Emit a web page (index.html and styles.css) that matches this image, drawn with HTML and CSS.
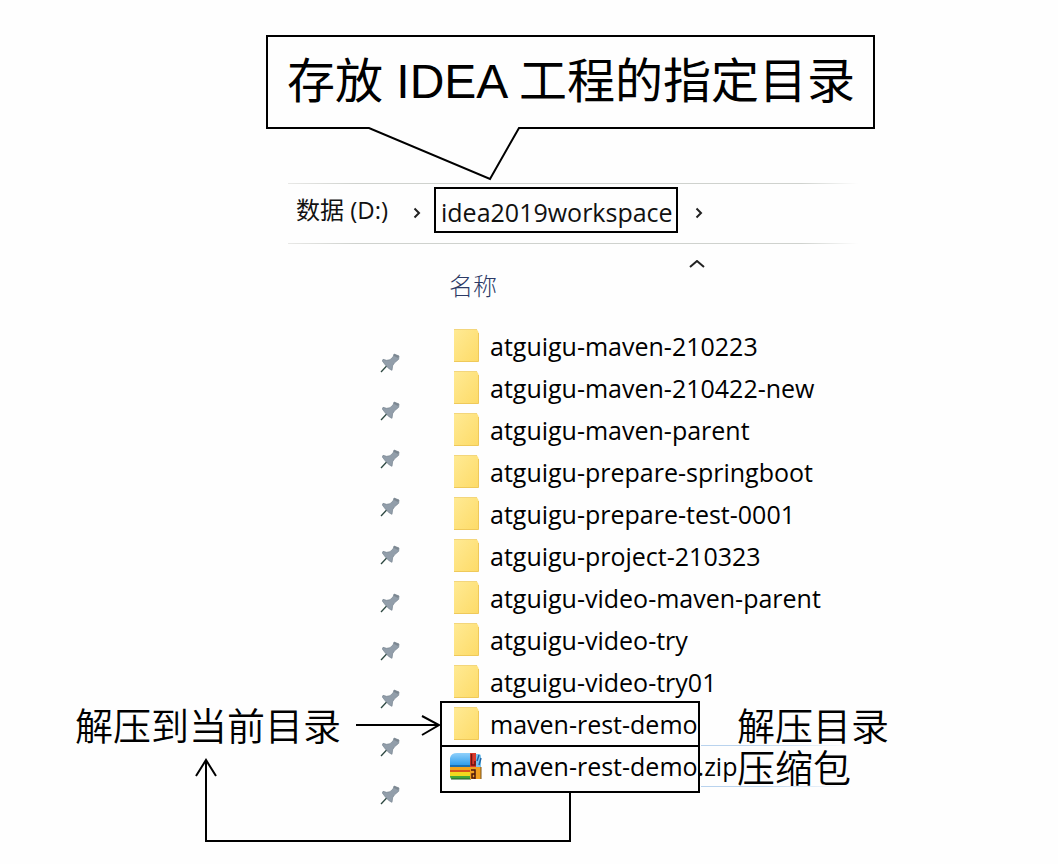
FILE: index.html
```html
<!DOCTYPE html>
<html lang="zh-CN">
<head>
<meta charset="utf-8">
<title>存放 IDEA 工程的指定目录</title>
<link rel="stylesheet" href="styles.css">
</head>
<body>
<svg class="defs" width="0" height="0" aria-hidden="true">
  <linearGradient id="folder-fill" x1="0" y1="0" x2="1" y2="1">
    <stop offset="0" stop-color="#ffea94"/><stop offset="1" stop-color="#fddb68"/>
  </linearGradient>
  <linearGradient id="sky" x1="0" y1="0" x2="0" y2="1">
    <stop offset="0" stop-color="#8fd0fb"/><stop offset="1" stop-color="#2b9bea"/>
  </linearGradient>
  <symbol id="folder" viewBox="0 0 26 33">
    <path d="M1 .5H24L25.500 3V32.500H1Z" fill="url(#folder-fill)"/>
    <path d="M1 32.500H25.500V4" fill="none" stroke="#efc95a" stroke-width="1"/>
    <path d="M1 .5H24" fill="none" stroke="#f3d67c" stroke-width="1"/>
  </symbol>
  <symbol id="pin" viewBox="30 98 60 60">
    <path d="M33 155L52 135" stroke="#2c4740" stroke-width="4"/>
    <path d="M72 101L87 107L86 117L73 128L68 136L66 150L58 146L46 134L37 122L39 117L50 120L60 118L69 110Z" fill="#929eaa" stroke="#74828e" stroke-width="2"/>
    <path d="M72 101L87 107L84 113L72 107Z" fill="#7c8791"/>
  </symbol>
  <symbol id="archive" viewBox="0 0 32 28">
    <path d="M0 14V6Q1 1 7 1H21V14Z" fill="url(#sky)"/>
    <path d="M0 13H21V16H0Z" fill="#1c6fae"/>
    <path d="M0 15H21V20H0Z" fill="#f5a51c"/>
    <path d="M0 18H21V20H0Z" fill="#d9531c"/>
    <path d="M0 20H21V25H0Z" fill="#f2d81e"/>
    <path d="M0 24H21V27H2Q0 27 0 24Z" fill="#45a537"/>
    <path d="M1 27H21" stroke="#1d5a2b"/>
    <path d="M20 1H26V15H20Z" fill="#d8392c"/>
    <path d="M26 2H29Q31 2 31 5V15H26Z" fill="#7cc4ee"/>
    <path d="M27 9L29 3M29 13L31 6" stroke="#1c66a8" stroke-width="1.500"/>
    <path d="M20 15H31V27H20Z" fill="#f0a020"/>
    <path d="M21.500 2V13H25V9" fill="none" stroke="#6c1410" stroke-width="1.500"/>
    <path d="M21 18H25V27M25 22H22V26H25" fill="none" stroke="#4a160c" stroke-width="1.500"/>
    <path d="M31 15V27" stroke="#76511a"/>
  </symbol>
</svg>

<main class="diagram">
  <header class="callout">
    <h1 class="callout-title">存放 IDEA 工程的指定目录</h1>
    <svg class="callout-tail" viewBox="0 0 160 56" aria-hidden="true">
      <path class="tail-gap" d="M5 1H155V4H5Z"/>
      <path class="tail-line" d="M2 3H5L126 54L155 3H158"/>
    </svg>
  </header>

  <nav class="path-bar" aria-label="路径">
    <a class="crumb" href="#drive">数据 (D:)</a>
    <svg class="chevron" viewBox="0 0 8 12" aria-hidden="true"><path d="M1.500 1.500L6 6L1.500 10.500"/></svg>
    <a class="crumb crumb-current" href="#workspace">idea2019workspace</a>
    <svg class="chevron" viewBox="0 0 8 12" aria-hidden="true"><path d="M1.500 1.500L6 6L1.500 10.500"/></svg>
  </nav>

  <div class="column-head">
    <svg class="sort" viewBox="0 0 16 8" aria-hidden="true"><path d="M1 7L8 1L15 7"/></svg>
    <span class="column-name">名称</span>
  </div>

  <section class="listing">
    <p class="note note-left">解压到当前目录</p>
    <div class="pins" aria-hidden="true">
      <svg class="pin"><use href="#pin"/></svg>
      <svg class="pin"><use href="#pin"/></svg>
      <svg class="pin"><use href="#pin"/></svg>
      <svg class="pin"><use href="#pin"/></svg>
      <svg class="pin"><use href="#pin"/></svg>
      <svg class="pin"><use href="#pin"/></svg>
      <svg class="pin"><use href="#pin"/></svg>
      <svg class="pin"><use href="#pin"/></svg>
      <svg class="pin"><use href="#pin"/></svg>
      <svg class="pin"><use href="#pin"/></svg>
    </div>
    <ul class="files">
      <li class="file"><svg class="folder"><use href="#folder"/></svg><span class="name">atguigu-maven-210223</span></li>
      <li class="file"><svg class="folder"><use href="#folder"/></svg><span class="name">atguigu-maven-210422-new</span></li>
      <li class="file"><svg class="folder"><use href="#folder"/></svg><span class="name">atguigu-maven-parent</span></li>
      <li class="file"><svg class="folder"><use href="#folder"/></svg><span class="name">atguigu-prepare-springboot</span></li>
      <li class="file"><svg class="folder"><use href="#folder"/></svg><span class="name">atguigu-prepare-test-0001</span></li>
      <li class="file"><svg class="folder"><use href="#folder"/></svg><span class="name">atguigu-project-210323</span></li>
      <li class="file"><svg class="folder"><use href="#folder"/></svg><span class="name">atguigu-video-maven-parent</span></li>
      <li class="file"><svg class="folder"><use href="#folder"/></svg><span class="name">atguigu-video-try</span></li>
      <li class="file"><svg class="folder"><use href="#folder"/></svg><span class="name">atguigu-video-try01</span></li>
      <li class="file"><svg class="folder"><use href="#folder"/></svg><span class="name">maven-rest-demo</span><span class="note">解压目录</span></li>
      <li class="file file-selected"><svg class="archive"><use href="#archive"/></svg><span class="name">maven-rest-demo.zip</span><span class="note">压缩包</span></li>
    </ul>
    <svg class="links" viewBox="0 0 720 530" aria-hidden="true">
      <path d="M441 377H699V467H441ZM441 421H699"/>
      <path d="M356 400H438M422 391L439 400L422 410"/>
      <path d="M570 467V516H206V436M196 451L206 435L216 451"/>
    </svg>
  </section>
</main>
</body>
</html>
```
FILE: styles.css
```css
* {
  box-sizing: border-box;
}

body {
  margin: 0;
  background: #fefefe;
  color: #000;
  font-family: "Open Sans", "Noto Sans CJK SC", sans-serif;
  font-size: 25px;
}

.defs {
  position: absolute;
}

.diagram {
  max-width: 1058px;
  margin: 0 auto;
  padding-top: 35px;
}

.callout {
  position: relative;
  width: fit-content;
  margin-left: 266px;
  padding: 0 18px 0 19px;
  border: 2px solid #000;
}

.callout-title {
  margin: 0;
  font: 400 48px/90px "Liberation Sans", "Noto Sans CJK SC", sans-serif;
  white-space: nowrap;
}

.callout-tail {
  position: absolute;
  top: 88px;
  left: 96px;
  width: 160px;
  height: 56px;
}

.tail-gap {
  fill: #fefefe;
}

.tail-line {
  fill: none;
  stroke: #000;
  stroke-width: 2;
}

.path-bar {
  display: flex;
  align-items: center;
  width: 570px;
  height: 61px;
  margin: 54px 0 0 288px;
  padding: 0 0 7px 8px;
  background:
    linear-gradient(90deg, #e8e8e6, #cfd2ce 12%, #cfd2ce 90%, #fefefe) top / 100% 1px no-repeat,
    linear-gradient(90deg, #e8e8e6, #cfd2ce 12%, #cfd2ce 90%, #fefefe) bottom / 100% 1px no-repeat;
}

.crumb {
  width: 117px;
  height: 46px;
  color: #111;
  font-size: 24px;
  line-height: 46px;
  text-decoration: none;
  white-space: nowrap;
}

.crumb-current {
  width: 244px;
  margin: 0 17px 0 13px;
  padding-left: 5px;
  border: 2px solid #000;
  background: #fefefe;
  font-size: 25px;
}

.chevron {
  width: 8px;
  height: 12px;
  margin-top: 6px;
  fill: none;
  stroke: #222;
  stroke-width: 2;
}

.column-head {
  height: 81px;
  padding: 16px 0 0 449px;
}

.sort {
  display: block;
  width: 16px;
  height: 8px;
  margin-left: 240px;
  fill: none;
  stroke: #222;
  stroke-width: 2;
}

.column-name {
  display: block;
  color: #2c3a66;
  font-size: 24px;
  font-weight: 300;
  line-height: 36px;
}

.listing {
  position: relative;
  display: grid;
  grid-template-columns: 305px 61px 1fr;
  padding: 0 0 40px 75px;
}

.note {
  margin: 0;
  font-family: "Noto Sans CJK SC", sans-serif;
  font-size: 38px;
  font-weight: 350;
  line-height: 42px;
  white-space: nowrap;
}

.note-left {
  padding-top: 378px;
}

.pins {
  display: grid;
  grid-auto-rows: 48px;
  align-items: center;
  padding-top: 14px;
}

.pin {
  width: 20px;
  height: 20px;
}

.files {
  margin: 0;
  padding: 0;
  list-style: none;
}

.file {
  display: grid;
  grid-template-columns: 49px 247px 1fr;
  align-items: center;
  height: 42px;
  line-height: 42px;
}

.file-selected {
  background:
    linear-gradient(90deg, #b9d3ee, #b9d3ee 40%, #fefefe) 260px 0 / 150px 1px no-repeat,
    linear-gradient(90deg, #b9d3ee, #b9d3ee 40%, #fefefe) 260px 100% / 150px 1px no-repeat;
}

.name {
  white-space: nowrap;
}

.folder {
  width: 26px;
  height: 33px;
  margin: 0 0 2px 12px;
}

.archive {
  width: 32px;
  height: 28px;
  margin-left: 9px;
}

.links {
  position: absolute;
  top: 0;
  left: 0;
  width: 720px;
  height: 530px;
  overflow: visible;
  fill: none;
  stroke: #000;
  stroke-width: 2;
}
```
